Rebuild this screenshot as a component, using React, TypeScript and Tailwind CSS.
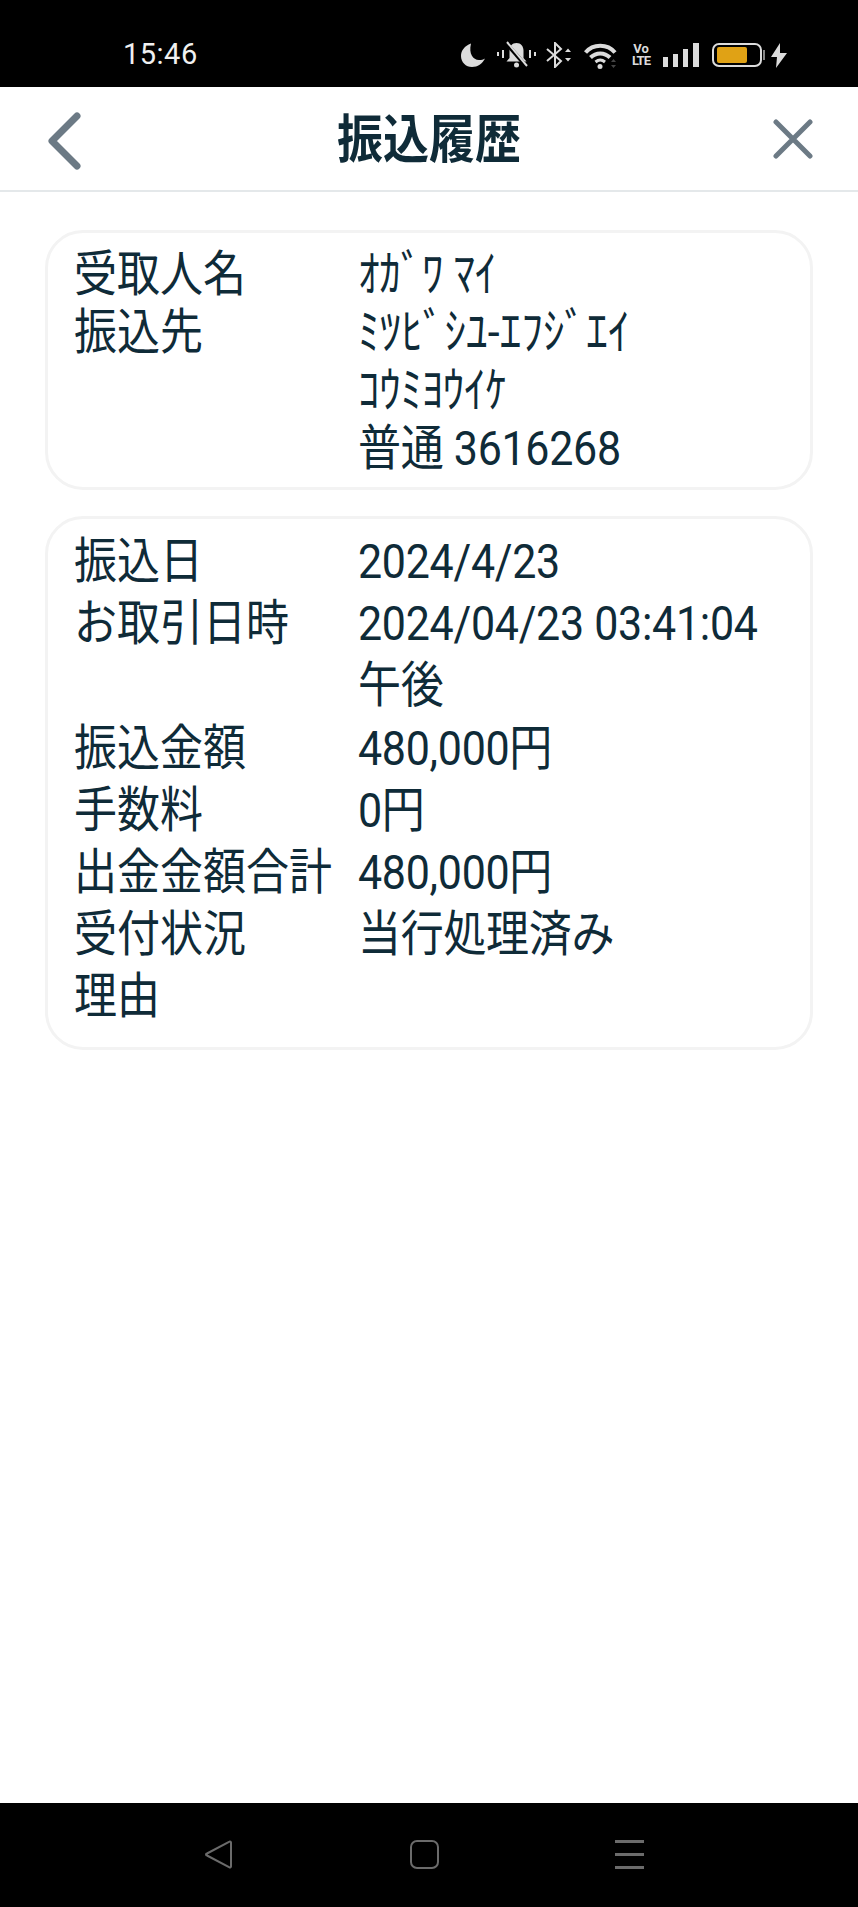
const stack = "font-['Roboto','Noto_Sans_CJK_JP',sans-serif]";

function StatusIcons() {
  return (
    <div className="flex items-center">
      {/* moon */}
      <svg width="24" height="24" viewBox="0 0 24 24" className="mr-[12px]">
        <path d="M10 0.500C3.500 3 0 7.500 0 13c0 6.200 4.800 11 11 11 5.600 0 10.500-3.400 13-8.500-2 1.200-4 1.600-6 1.500C12 16.800 7.500 11 10 0.500z" fill="#dcdcdc" />
      </svg>
      {/* muted bell with vibrate ticks */}
      <svg width="39" height="28" viewBox="0 0 39 28" className="mr-[10px]" fill="#dcdcdc">
        <rect x="0" y="11" width="2" height="4" />
        <rect x="5" y="9" width="2" height="8" />
        <rect x="32" y="9" width="2" height="8" />
        <rect x="37" y="11" width="2" height="4" />
        <path d="M19.500 2c-4.500 0-7 3.500-7 7.500V17l-3 3.500h20L26.500 17V9.500c0-4-2.500-7.500-7-7.500z" />
        <circle cx="19.500" cy="24" r="2.500" />
        <path d="M9 2l20 23" stroke="#000" strokeWidth="4" />
        <path d="M10 1l20 24" stroke="#dcdcdc" strokeWidth="2" />
      </svg>
      {/* bluetooth */}
      <svg width="27" height="26" viewBox="0 0 27 26" className="mr-[11px]" fill="none">
        <path d="M1 7l14 12-6 6V1l6 6L1 19" stroke="#dcdcdc" strokeWidth="2" />
        <path d="M19 10l3-3.500 3 3.500zM19 16l3 3.500 3-3.500z" fill="#dcdcdc" />
      </svg>
      {/* wifi */}
      <svg width="33" height="27" viewBox="0 0 33 27" className="mr-[15px]" fill="none">
        <path d="M1.500 10.500C9 1.500 23.500 1.500 31 10.500" stroke="#dcdcdc" strokeWidth="4" />
        <path d="M6.500 15.500c5.500-5.500 14-5.500 19.500 0" stroke="#dcdcdc" strokeWidth="4" />
        <path d="M11.500 20c3-2.500 6.500-2.500 9.500 0" stroke="#dcdcdc" strokeWidth="3" />
        <circle cx="16" cy="24.500" r="2.500" fill="#dcdcdc" />
        <path d="M27 20l2.500-3 2.500 3zM27 23l2.500 3 2.500-3z" fill="#444" />
      </svg>
      {/* volte */}
      <div className="mr-[13px] flex w-[18px] flex-col items-center text-[13px] leading-[12px] font-bold text-[#dcdcdc]">
        <span>Vo</span>
        <span className="tracking-[-1px]">LTE</span>
      </div>
      {/* signal */}
      <div className="mr-[13px] flex h-[24px] items-end gap-[5px]">
        <div className="h-[10px] w-[5px] bg-[#dcdcdc]" />
        <div className="h-[13px] w-[5px] bg-[#dcdcdc]" />
        <div className="h-[18px] w-[5px] bg-[#dcdcdc]" />
        <div className="h-[24px] w-[6px] bg-[#dcdcdc]" />
      </div>
      {/* battery */}
      <div className="mr-[6px] flex items-center">
        <div className="flex h-[24px] w-[50px] items-center rounded-[7px] border-2 border-[#dcdcdc] px-[3px]">
          <div className="h-[16px] w-[30px] rounded-[2px] bg-[#e0a215]" />
        </div>
        <div className="ml-[1px] h-[10px] w-[2px] bg-[#888]" />
      </div>
      {/* charging bolt */}
      <svg width="16" height="25" viewBox="0 0 16 25" fill="#dcdcdc">
        <path d="M9 0L0 14h6l-1 11 11-15H9z" />
      </svg>
    </div>
  );
}

function Row({ label, children }: { label?: string; children?: React.ReactNode }) {
  return (
    <>
      <div className="scale-y-[1.14]">{label}</div>
      <div className="scale-y-[1.14] tracking-[-0.3px]">{children}</div>
    </>
  );
}

export default function App() {
  return (
    <div className={`flex h-[1907px] w-[858px] flex-col bg-white text-[#0f2b38] ${stack}`}>
      <div className="flex h-[87px] shrink-0 items-center justify-between bg-black pt-[23px] pr-[71px] pl-[123px]">
        <span className="text-[29px] tracking-[0.5px] text-[#f0f0f0]">15:46</span>
        <StatusIcons />
      </div>

      <header className="flex h-[105px] shrink-0 items-center justify-between border-b-2 border-[#e4e8ea] pr-[45px] pl-[47px]">
        <svg width="34" height="58" viewBox="0 0 34 58" fill="none" className="mt-[5px]">
          <path d="M30 4L5 29l25 25" stroke="#6c7a85" strokeWidth="7" strokeLinecap="round" strokeLinejoin="round" />
        </svg>
        <h1 className="mt-[2px] ml-[4px] scale-y-[1.14] text-[46px] leading-none font-bold">振込履歴</h1>
        <svg width="40" height="40" viewBox="0 0 40 40" fill="none">
          <path d="M3 3l34 34M37 3L3 37" stroke="#6c7a85" strokeWidth="5" strokeLinecap="round" />
        </svg>
      </header>

      <main className="flex flex-1 flex-col gap-[26px] px-[45px] pt-[38px]">
        <section className="grid grid-cols-[284px_1fr] rounded-[38px] border-[3px] border-[#f3f3f3] pt-[12px] pr-[20px] pb-[10px] pl-[26px] text-[43px] leading-[58px]">
          <Row label="受取人名">ｵｶﾞﾜ ﾏｲ</Row>
          <Row label="振込先"><span className="tracking-[0.15px]">ﾐﾂﾋﾞｼﾕ-ｴﾌｼﾞｴｲ</span></Row>
          <Row>ｺｳﾐﾖｳｲｹ</Row>
          <Row>普通 3616268</Row>
        </section>

        <section className="grid grid-cols-[284px_1fr] rounded-[38px] border-[3px] border-[#f3f3f3] pt-[11px] pr-[20px] pb-[19px] pl-[26px] text-[43px] leading-[62.200px]">
          <Row label="振込日">2024/4/23</Row>
          <Row label="お取引日時">2024/04/23 03:41:04</Row>
          <Row>午後</Row>
          <Row label="振込金額">480,000円</Row>
          <Row label="手数料">0円</Row>
          <Row label="出金金額合計">480,000円</Row>
          <Row label="受付状況">当行処理済み</Row>
          <Row label="理由" />
        </section>
      </main>

      <nav className="flex h-[104px] shrink-0 items-center bg-black pb-[2px] pl-[205px]">
        <svg width="28" height="29" viewBox="0 0 28 29" fill="none" className="mr-[177px]">
          <path d="M26 2.500v24a1 1 0 0 1-1.500 .8L2 15.500a1 1 0 0 1 0-2L24.500 1.700a1 1 0 0 1 1.500 .8z" stroke="#6b6b6b" strokeWidth="2" strokeLinejoin="round" />
        </svg>
        <div className="mr-[176px] h-[29px] w-[29px] rounded-[7px] border-2 border-[#6b6b6b]" />
        <div className="flex w-[29px] flex-col gap-[10px]">
          <div className="h-[3px] bg-[#6b6b6b]" />
          <div className="h-[3px] bg-[#6b6b6b]" />
          <div className="h-[3px] bg-[#6b6b6b]" />
        </div>
      </nav>
    </div>
  );
}
